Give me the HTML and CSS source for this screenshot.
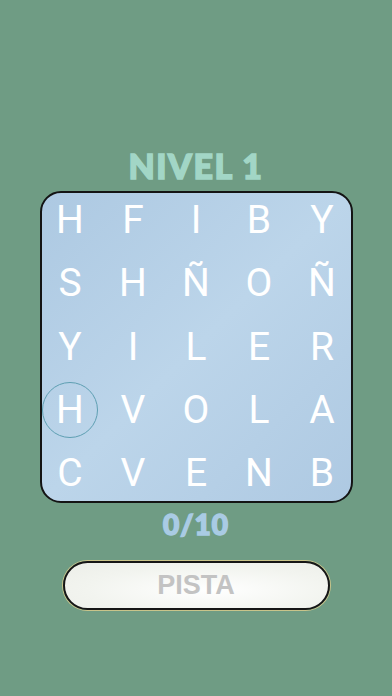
FILE: index.html
```html
<!DOCTYPE html>
<html lang="es">
<head>
<meta charset="utf-8">
<title>Nivel 1</title>
<link rel="stylesheet" href="styles.css">
</head>
<body>
<main class="screen">
  <h1 class="level">NIVEL 1</h1>
  <section class="board">
    <div class="grid">
      <span class="cell">H</span><span class="cell">F</span><span class="cell">I</span><span class="cell">B</span><span class="cell">Y</span>
      <span class="cell">S</span><span class="cell">H</span><span class="cell">Ñ</span><span class="cell">O</span><span class="cell">Ñ</span>
      <span class="cell">Y</span><span class="cell">I</span><span class="cell">L</span><span class="cell">E</span><span class="cell">R</span>
      <span class="cell"><span class="ring">H</span></span><span class="cell">V</span><span class="cell">O</span><span class="cell">L</span><span class="cell">A</span>
      <span class="cell">C</span><span class="cell">V</span><span class="cell">E</span><span class="cell">N</span><span class="cell">B</span>
    </div>
  </section>
  <p class="score">0/10</p>
  <button class="hint" type="button">PISTA</button>
</main>
</body>
</html>
```

FILE: styles.css
```css
html, body {
  margin: 0;
  padding: 0;
}
body {
  background: #6f9c84;
  width: 392px;
  height: 696px;
  overflow: hidden;
  font-family: "Liberation Sans", Arial, sans-serif;
}
.screen {
  display: flex;
  flex-direction: column;
  align-items: center;
  padding-top: 146px;
}
.level {
  margin: 0;
  font-family: Lato, "Liberation Sans", sans-serif;
  font-weight: 900;
  font-size: 34px;
  line-height: 40px;
  color: #a2d6c6;
  -webkit-text-stroke: 1.5px #a2d6c6;
  letter-spacing: 1.5px;
}
.board {
  margin-top: 5px;
  width: 313px;
  height: 312px;
  box-sizing: border-box;
  border: 2px solid #141414;
  border-radius: 21px;
  background: linear-gradient(135deg, #adc9e2 0%, #bcd5ea 50%, #aec9e2 100%);
  display: flex;
  justify-content: center;
  align-items: center;
}
.grid {
  display: grid;
  grid-template-columns: repeat(5, 63px);
  grid-template-rows: repeat(5, 63.4px);
  flex: none;
}
.cell {
  display: flex;
  align-items: center;
  justify-content: center;
  color: #ffffff;
  font-family: Roboto, "Liberation Sans", sans-serif;
  font-weight: 400;
  font-size: 39px;
  line-height: 1;
}
.ring {
  width: 56px;
  height: 56px;
  box-sizing: border-box;
  border: 1.5px solid #5e9fb2;
  border-radius: 50%;
  display: flex;
  align-items: center;
  justify-content: center;
}
.score {
  margin: 5px 0 0;
  font-family: Lato, "Liberation Sans", sans-serif;
  font-weight: 900;
  font-size: 28px;
  line-height: 32px;
  color: #a9cbe4;
  -webkit-text-stroke: 1.5px #a9cbe4;
  letter-spacing: 1px;
}
.hint {
  margin-top: 21px;
  width: 267px;
  height: 49px;
  box-sizing: border-box;
  border: 2px solid #161616;
  border-radius: 25px;
  background: radial-gradient(ellipse at 55% 60%, #ffffff 0%, #f2f4ef 60%, #eceee8 100%);
  box-shadow: 0 0 0 1px #c9c48a;
  font-family: "Liberation Sans", Arial, sans-serif;
  font-weight: 700;
  font-size: 27px;
  color: #c3c3c3;
  padding: 0;
}
```
